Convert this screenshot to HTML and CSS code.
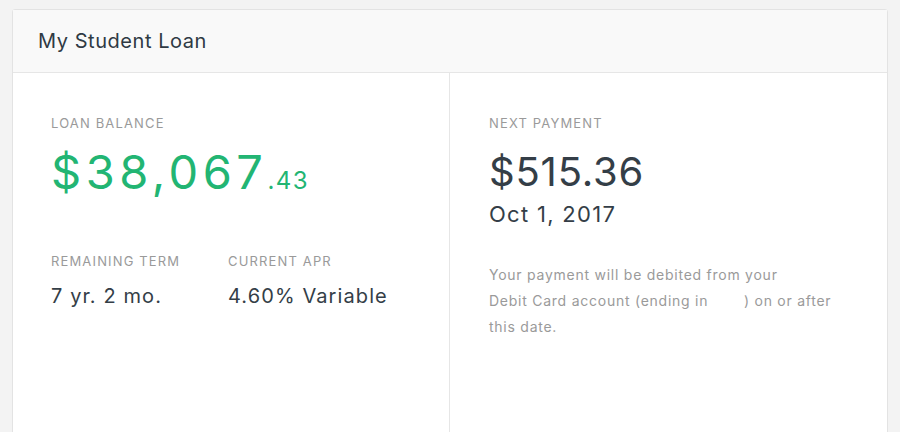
FILE: index.html
```html
<!DOCTYPE html>
<html>
<head>
<meta charset="utf-8">
<link rel="stylesheet" href="styles.css">
</head>
<body>
<div class="card">
  <div class="card-header">My Student Loan</div>
  <div class="card-body">
    <div class="col col-left">
      <div class="label">Loan Balance</div>
      <div class="balance">$38,067<span class="cents">.43</span></div>
      <div class="stats">
        <div class="stat">
          <div class="label">Remaining Term</div>
          <div class="value">7 yr. 2 mo.</div>
        </div>
        <div class="stat">
          <div class="label">Current APR</div>
          <div class="value">4.60% Variable</div>
        </div>
      </div>
    </div>
    <div class="col col-right">
      <div class="label">Next Payment</div>
      <div class="payment">$515.36</div>
      <div class="date">Oct 1, 2017</div>
      <p class="note">Your payment will be debited from your<br>Debit Card account (ending in&nbsp;&ensp;&ensp;&ensp;&ensp;) on or after this date.</p>
    </div>
  </div>
</div>
</body>
</html>
```
FILE: styles.css
```css
html, body {
  margin: 0;
  padding: 0;
  background: #f3f3f3;
  font-family: Inter, "Noto Sans", sans-serif;
  color: #343e47;
}
body {
  padding: 9px 12px 0 12px;
  height: 432px;
  box-sizing: border-box;
  overflow: hidden;
}
.card {
  background: #fff;
  border: 1px solid #e3e3e3;
  border-radius: 3px 3px 0 0;
  width: 876px;
  box-sizing: border-box;
  height: 440px;
  display: flex;
  flex-direction: column;
}
.card-header {
  background: #f9f9f9;
  height: 63px;
  box-sizing: border-box;
  border-bottom: 1px solid #e6e6e6;
  padding: 0 25px;
  display: flex;
  align-items: center;
  font-size: 20px;
  letter-spacing: 0.55px;
  color: #2f3a44;
}
.card-body {
  display: flex;
  flex: 1;
}
.col {
  box-sizing: border-box;
  padding: 41px 38px 0 38px;
}
.col-left {
  width: 437px;
  flex-shrink: 0;
  border-right: 1px solid #e6e6e6;
}
.col-right {
  flex: 1;
  min-width: 0;
  padding-left: 39px;
}
.label {
  font-size: 13px;
  letter-spacing: 1.15px;
  text-transform: uppercase;
  color: #9a9a9a;
  line-height: 18px;
}
.balance {
  color: #22b573;
  font-size: 47px;
  line-height: 56px;
  margin-top: 12px;
  letter-spacing: 4.5px;
}
.cents {
  font-size: 24px;
  letter-spacing: 1.5px;
}
.stats {
  display: flex;
  margin-top: 43px;
}
.stat {
  width: 177px;
}
.value {
  font-size: 20px;
  line-height: 28px;
  margin-top: 12px;
  letter-spacing: 1.1px;
}
.payment {
  font-size: 40px;
  line-height: 48px;
  margin-top: 16px;
  letter-spacing: 0.8px;
}
.date {
  font-size: 22px;
  line-height: 28px;
  margin-top: 4px;
  letter-spacing: 1.3px;
}
.note {
  margin: 34px 0 0 0;
  font-size: 14px;
  line-height: 26px;
  color: #9a9a9a;
  letter-spacing: 0.75px;
}
```
